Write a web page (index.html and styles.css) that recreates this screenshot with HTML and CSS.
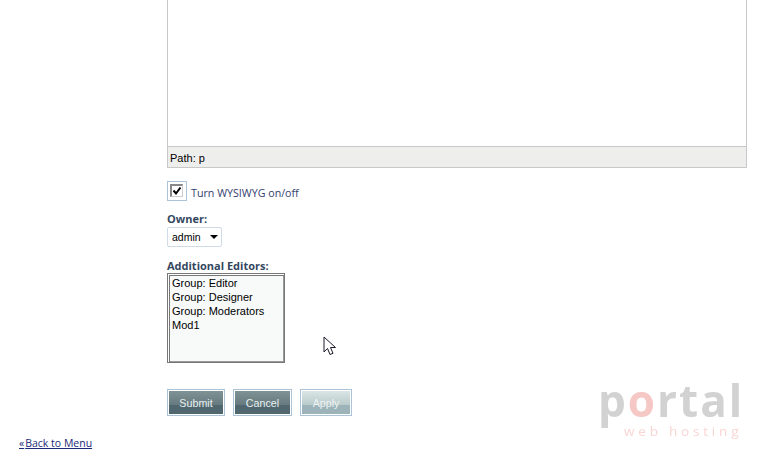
FILE: index.html
```html
<!DOCTYPE html>
<html lang="en">
<head>
<meta charset="utf-8">
<title>Edit page</title>
<link rel="stylesheet" href="styles.css">
</head>
<body>
<main class="page">
  <form class="form">
    <section class="editor">
      <div class="editor-area"></div>
      <div class="editor-path">Path: p</div>
    </section>
    <div class="toggle">
      <span class="check-frame"><span class="check-box"><svg width="10" height="10" viewBox="0 0 10 10"><path d="M1.500 4.500l2.500 3L8.500 1.500" fill="none" stroke="#000" stroke-width="2"/></svg></span></span>
      <a class="toggle-label">Turn WYSIWYG on/off</a>
    </div>
    <div class="field-owner">
      <div class="label">Owner:</div>
      <div class="select"><span class="select-value">admin</span><span class="select-arrow"></span></div>
    </div>
    <div class="field-editors">
      <div class="label">Additional Editors:</div>
      <div class="listbox">
        <div>Group: Editor</div>
        <div>Group: Designer</div>
        <div>Group: Moderators</div>
        <div>Mod1</div>
      </div>
    </div>
    <div class="actions">
      <span class="btn-frame"><span class="btn btn-submit">Submit</span></span>
      <span class="btn-frame"><span class="btn btn-cancel">Cancel</span></span>
      <span class="btn-frame"><span class="btn btn-apply">Apply</span></span>
    </div>
  </form>
  <a class="back"><span class="back-mark">«</span>Back to Menu</a>
</main>
<svg class="cursor" width="14" height="21" viewBox="0 0 14 21"><path d="M1 1v15l3.500-3.500 2.500 6 3-1.200-2.500-5.800h5z" fill="#fff" stroke="#1a1a2a" stroke-width="1"/></svg>
<div class="logo">
  <div class="logo-main">p<span class="logo-o">o</span>rtal</div>
  <div class="logo-sub">web hosting</div>
</div>
</body>
</html>
```
FILE: styles.css
```css
html, body { margin: 0; padding: 0; background: #fff; }
body { width: 776px; height: 450px; overflow: hidden; position: relative; font-family: "Liberation Sans", Arial, sans-serif; font-size: 11px; color: #000; }
.page { display: flex; flex-direction: column; height: 450px; }
.form { padding-left: 167px; width: 580px; }
.editor { border: 1px solid #c8c8c8; border-top: 0; height: 167px; display: flex; flex-direction: column; width: 578px; }
.editor-area { flex: 1; background: #fff; border-bottom: 1px solid #c8c8c8; }
.editor-path { height: 20px; line-height: 23px; padding-left: 2px; background: #eeeeec; font-size: 11px; }
.toggle { display: flex; align-items: center; margin-top: 13px; height: 20px; }
.check-frame { box-sizing: border-box; width: 20px; height: 20px; border: 1px solid #a9c4da; padding: 2px; display: block; }
.check-box { box-sizing: border-box; width: 13px; height: 13px; border: 1px solid #888; border-top-width: 2px; border-left-width: 2px; border-right-color: #ccc; border-bottom-color: #ccc; background: #fff; display: block; line-height: 0; }
.toggle-label { margin-left: 4px; margin-top: 3px; color: #33416f; font-family: "Open Sans", sans-serif; font-size: 10.700px; }
.label { font-weight: bold; color: #33475f; font-size: 11px; line-height: 13px; font-family: "Open Sans", sans-serif; }
.field-owner { margin-top: 11px; }
.select { margin-top: 2px; width: 53px; height: 18px; border: 1px solid #cfdbe6; border-radius: 2px; display: flex; align-items: center; }
.select-value { margin-left: 4px; font-size: 10.500px; width: 33px; }
.select-arrow { margin-left: 5px; width: 0; height: 0; border-left: 4px solid transparent; border-right: 4px solid transparent; border-top: 4px solid #000; }
.field-editors { margin-top: 12px; }
.listbox { margin-top: 1px; box-sizing: border-box; width: 118px; height: 90px; border: 1px solid #777; background: #f7faf8; box-shadow: inset 1px 1px 0 #fff, inset 2px 2px 0 #777, inset -1px -1px 0 #999; padding: 2px 4px; font-size: 11px; line-height: 14px; }
.actions { display: flex; margin-top: 26px; gap: 8px; }
.btn-frame { border: 1px solid #aac3d8; padding: 1px; display: block; }
.btn { display: block; height: 23px; line-height: 24px; text-align: center; font-size: 10.700px; color: #e6f0f2; }
.btn-submit { width: 54px; background: linear-gradient(#7f9396, #66797e 62%, #50676f 62%); }
.btn-cancel { width: 55px; background: linear-gradient(#7f9396, #66797e 62%, #50676f 62%); }
.btn-apply { width: 48px; background: linear-gradient(#dbe5e5, #b9cacb 62%, #9cb4b9 62%); color: #eef3f3; }
.back { margin-top: 20px; margin-left: 19px; color: #1b2a78; text-decoration: underline; font-family: "Open Sans", sans-serif; font-size: 10.500px; line-height: 15px; }
.back-mark { margin-right: 1px; }
.cursor { position: absolute; left: 323px; top: 336px; }
.logo { position: absolute; left: 598px; top: 377px; width: 150px; filter: blur(0.4px); }
.logo-main { font-family: "Open Sans", sans-serif; font-size: 44px; line-height: 46px; color: #d2d2d2; font-weight: 700; letter-spacing: 2px; }
.logo-o { color: #f5c8c6; }
.logo-sub { margin-left: 26px; font-family: "Open Sans", sans-serif; font-size: 13.500px; line-height: 16px; letter-spacing: 3.800px; color: #f9d6d4; white-space: nowrap; }
```
